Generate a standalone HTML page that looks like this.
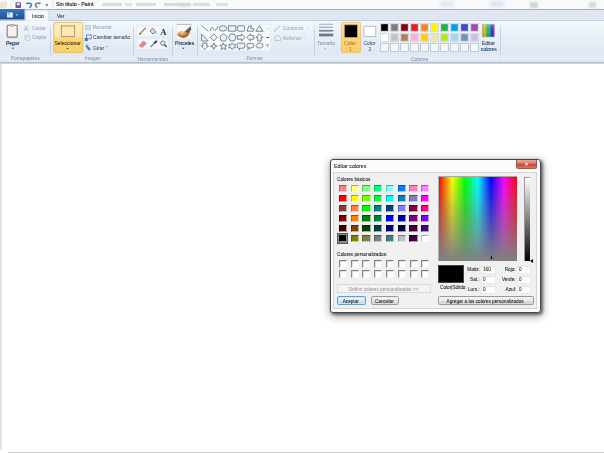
<!DOCTYPE html><html><head><meta charset="utf-8"><style>
*{margin:0;padding:0;box-sizing:border-box}
html,body{width:604px;height:453px;overflow:hidden;background:#fff;font-family:"Liberation Sans",sans-serif;position:relative}
.a{position:absolute}
.t{position:absolute;white-space:nowrap;line-height:1;color:#222;-webkit-text-stroke:.06px currentColor}
.sep{position:absolute;width:1px;background:linear-gradient(rgba(197,210,226,0),#c5d2e2 20%,#c5d2e2 80%,rgba(197,210,226,0))}
.glabel{position:absolute;top:55.5px;font-size:5px;color:#6f7f94;white-space:nowrap;line-height:1}
.rt{position:absolute;font-size:5px;color:#1e395b;white-space:nowrap;line-height:1}
.dis{color:#9aa5b3}
.sw{position:absolute;width:8.2px;height:7.4px;border-top:1px solid rgba(0,0,0,.35);border-left:1px solid rgba(0,0,0,.25);border-right:.5px solid rgba(255,255,255,.6);border-bottom:.5px solid rgba(255,255,255,.6)}
.cb{position:absolute;width:8px;height:8px;background:#fff;border-top:1px solid #7e7e7e;border-left:1px solid #8a8a8a;border-right:1px solid #f4f4f4;border-bottom:1px solid #f4f4f4;box-shadow:inset .6px .6px 0 #c8c8c8}
.dt{position:absolute;white-space:nowrap;line-height:1;color:#1a1a1a;font-size:4.7px;-webkit-text-stroke:.06px currentColor}
.btn{position:absolute;border:1px solid #9a9a9a;border-radius:1.5px;background:linear-gradient(#f4f4f4,#ebebeb 50%,#dedede 51%,#d6d6d6)}
.ed{position:absolute;background:#fdfdfd;border:.5px solid #ebebeb;border-top-color:#e2e2e2}
</style></head><body><div id="root" style="position:absolute;left:0;top:0;width:604px;height:453px;overflow:hidden;will-change:transform">
<div class="a" style="left:0;top:0;width:604px;height:9px;background:#f7f9fb"></div>
<div class="a" style="left:0;top:8.8px;width:604px;height:1.2px;background:#a8afb8"></div>
<div class="a" style="left:0;top:9.7px;width:604px;height:10.3px;background:#e0e7f0"></div>
<div class="a" style="left:0;top:20px;width:604px;height:42.4px;background:linear-gradient(#f4f8fd,#e9eff7 35%,#dfe8f3 80%,#e4ebf5 86%,#e6edf6 95%,#d8e0ea);border-top:1px solid #bfcde0"></div>
<div class="a" style="left:0;top:62.4px;width:604px;height:2px;background:linear-gradient(#aebbcb,#d5dbe3)"></div>
<div class="a" style="left:0;top:64px;width:2px;height:386px;background:linear-gradient(90deg,#d8e0ea,#e6ecf3)"></div>
<div class="a" style="left:8px;top:452px;width:596px;height:1px;background:#cacaca"></div>
<div class="a" style="left:102.0px;top:3.2px;width:19.7px;height:2.6px;background:#dadde1;filter:blur(.6px)"></div>
<div class="a" style="left:124.5px;top:3.2px;width:7.5px;height:2.6px;background:#e0e3e6;filter:blur(.6px)"></div>
<div class="a" style="left:136.0px;top:3.2px;width:20.4px;height:2.6px;background:#dadde1;filter:blur(.6px)"></div>
<div class="a" style="left:164.0px;top:3.2px;width:27.3px;height:2.6px;background:#d6dadd;filter:blur(.6px)"></div>
<div class="a" style="left:193.0px;top:3.2px;width:16.8px;height:2.6px;background:#dadde1;filter:blur(.6px)"></div>
<div class="a" style="left:215.6px;top:3.2px;width:12.8px;height:2.6px;background:#dee1e4;filter:blur(.6px)"></div>
<div class="a" style="left:180px;top:3px;width:10px;height:4px;background:#c8e0d4;filter:blur(.8px);opacity:.7"></div>
<div class="a" style="left:440px;top:1px;width:14px;height:6px;background:#c8d2e6;filter:blur(1.5px);opacity:.4"></div>
<div class="a" style="left:490px;top:1px;width:14px;height:6px;background:#c0c4e6;filter:blur(1.5px);opacity:.4"></div>
<div class="a" style="left:530px;top:2px;width:8px;height:6px;background:#a0a4aa;filter:blur(1.2px);opacity:.45"></div>
<div class="a" style="left:589px;top:2px;width:7px;height:6px;background:#b0b4ba;filter:blur(1.2px);opacity:.45"></div>

<svg class="a" style="left:0;top:0" width="604" height="64" viewBox="0 0 604 64">
<!-- QAT -->
<rect x="0" y="2" width="7" height="6" fill="#d8dcc0" opacity=".55"/>
<rect x="10.5" y="1" width="0.8" height="7" fill="#dde0e4"/>
<rect x="15.5" y="2.3" width="5.5" height="5.6" rx=".6" fill="#6d5c9c"/>
<rect x="16.8" y="3" width="3" height="2.2" fill="#e8e4f4"/>
<path d="M27 3.3 L29.6 3.3 Q31.4 3.3 31.4 5.1 Q31.4 6.6 29.4 7.7" fill="none" stroke="#3a84b2" stroke-width="1.6"/>
<path d="M25.8 3.3 L27.9 1.9 L27.9 4.7Z" fill="#3a84b2"/>
<path d="M39.8 3.3 L37.4 3.3 Q35.6 3.3 35.6 5.1 Q35.6 6.6 37.4 7.7" fill="none" stroke="#4a8cb6" stroke-width="1.6"/>
<path d="M41.1 3.3 L39.1 1.9 L39.1 4.7Z" fill="#4a8cb6"/>
<path d="M45.4 4.2 L48.2 4.2 L46.8 6.6Z" fill="#505a66"/>
<rect x="52.5" y="1" width="0.8" height="7" fill="#dde0e4"/>
<!-- file button -->
<rect x="0" y="9" width="24.5" height="10.5" fill="url(#gfile)"/>
<rect x="7" y="12.5" width="5.8" height="5" fill="#e6eefa"/>
<rect x="7.6" y="13.2" width="2" height="1.6" fill="#7aa0d0"/>
<path d="M15.8 14.6 L18 14.6 L16.9 15.8Z" fill="#fff"/>
<!-- inicio tab -->
<path d="M25.6 20.8 L25.6 10.8 Q25.6 10.1 26.4 10.1 L48 10.1 Q48.8 10.1 48.8 10.8 L48.8 20.8" fill="#f7fafd" stroke="#c4d2e2" stroke-width=".7"/>
<defs>
<linearGradient id="gfile" x1="0" y1="0" x2="0" y2="1"><stop offset="0" stop-color="#3a78c8"/><stop offset=".5" stop-color="#2a62b0"/><stop offset="1" stop-color="#1f4f98"/></linearGradient>
<linearGradient id="gsel" x1="0" y1="0" x2="0" y2="1"><stop offset="0" stop-color="#fdecb8"/><stop offset=".5" stop-color="#fce09a"/><stop offset=".53" stop-color="#fcd678"/><stop offset="1" stop-color="#fbd268"/></linearGradient>
<linearGradient id="gc1" x1="0" y1="0" x2="0" y2="1"><stop offset="0" stop-color="#fde7b2"/><stop offset=".45" stop-color="#fcd77e"/><stop offset="1" stop-color="#fbcf62"/></linearGradient>
<linearGradient id="gbrush" x1="0" y1="0" x2="1" y2="1"><stop offset="0" stop-color="#f4e2d0"/><stop offset=".5" stop-color="#c46a2a"/><stop offset="1" stop-color="#6a3a1a"/></linearGradient>
<linearGradient id="grain" x1="0" y1="0" x2="1" y2="0"><stop offset="0" stop-color="#f0902a"/><stop offset=".22" stop-color="#d0e020"/><stop offset=".42" stop-color="#30c840"/><stop offset=".6" stop-color="#20b0c8"/><stop offset=".78" stop-color="#3a30e0"/><stop offset="1" stop-color="#c030d0"/></linearGradient>
<linearGradient id="gshade" x1="0" y1="0" x2="0" y2="1"><stop offset="0" stop-color="#fff" stop-opacity=".25"/><stop offset=".6" stop-color="#000" stop-opacity=".05"/><stop offset="1" stop-color="#000" stop-opacity=".2"/></linearGradient>
</defs>

<!-- Portapapeles -->
<rect x="7.2" y="25.3" width="10" height="11.8" rx=".8" fill="#f7f0ee" stroke="#8b7b6e" stroke-width="1.1"/>
<rect x="10.2" y="24.6" width="4" height="1.4" rx=".4" fill="#e8e4e0" stroke="#8b7b6e" stroke-width=".6"/>
<path d="M11.7 47.8 L14.1 47.8 L12.9 49.2Z" fill="#304a6a"/>
<!-- scissors -->
<path d="M24.6 25.6 L27.6 29.4 M27.8 25.6 L24.8 29.4" stroke="#a8b4c2" stroke-width=".8"/>
<circle cx="24.9" cy="29.6" r=".9" fill="none" stroke="#a8b4c2" stroke-width=".6"/>
<circle cx="27.6" cy="29.6" r=".9" fill="none" stroke="#a8b4c2" stroke-width=".6"/>
<!-- copy -->
<rect x="24.8" y="35" width="3.6" height="4.2" fill="#f4f6f9" stroke="#b4bfcc" stroke-width=".6"/>
<rect x="26.2" y="36.2" width="3.6" height="4.2" fill="#eef1f6" stroke="#b4bfcc" stroke-width=".6"/>

<!-- Seleccionar -->
<rect x="53.8" y="22.4" width="29" height="30" rx="1.2" fill="url(#gsel)" stroke="#e5b85c" stroke-width=".8"/>
<rect x="54.5" y="23" width="27.6" height="15.5" fill="#fff" opacity=".18"/>
<rect x="54.4" y="37.6" width="27.8" height="1" fill="#f6c860" opacity=".6"/>
<rect x="61.3" y="25.9" width="13.4" height="10.6" fill="#fce8b0" stroke="#a08660" stroke-width=".85"/>
<path d="M66.4 47.9 L68.8 47.9 L67.6 49.3Z" fill="#4a3010"/>
<!-- crop / resize / rotate -->
<rect x="85.6" y="25.3" width="4.6" height="4.6" fill="#c4d2e0" stroke="#a8bccf" stroke-width=".6"/>
<path d="M87.1 25.3 V29.9 M88.6 25.3 V29.9 M85.6 27.6 H90.2" stroke="#e8eef5" stroke-width=".5"/>
<rect x="86.6" y="35" width="4.6" height="3.8" fill="#eef4fb" stroke="#3a6ea8" stroke-width=".8"/>
<rect x="85" y="38.4" width="2.6" height="2.4" fill="#4a86c0" stroke="#2a5a90" stroke-width=".5"/>
<path d="M85.4 46.2 L87.4 45 L90.8 49.4 L88.8 50.6 Z" fill="#3a7aa8" opacity=".9"/>
<path d="M85.2 45.4 Q86.6 44.4 88.2 45" fill="none" stroke="#5ab0d8" stroke-width=".7"/>
<path d="M106.2 46.2 L108 46.2 L107.1 47.3Z" fill="#405070"/>

<!-- Herramientas box -->
<rect x="136.3" y="25.2" width="31.7" height="11" fill="#f3f6fa" stroke="#e0e6ee" stroke-width=".6"/>
<rect x="136.3" y="38.8" width="31.7" height="10.4" fill="#f3f6fa" stroke="#e0e6ee" stroke-width=".6"/>
<path d="M139.6 34.2 L145.8 27.8" stroke="#b09a58" stroke-width="1.6"/>
<path d="M139.4 34.4 L140.6 33" stroke="#606060" stroke-width="1.2"/>
<path d="M150 31 L152.5 28.2 L155.6 31.4 L153 34 Z" fill="#d0d8e2" stroke="#5a6a80" stroke-width=".8"/>
<path d="M155.6 31.4 Q156.6 33 156.2 34" stroke="#3a9ad0" stroke-width=".8" fill="none"/>
<text x="160.3" y="34.7" font-family="Liberation Serif" font-weight="bold" font-size="8.6" fill="#1a2436">A</text>
<path d="M139 45.8 L143.4 41 L146.4 43.4 L142.2 47.6 Z" fill="#e48a8e" stroke="#d27a7c" stroke-width=".6"/>
<path d="M150.6 47 L154.6 43" stroke="#6a8aa8" stroke-width="1.1"/>
<path d="M154.2 43.4 L156.8 40.8" stroke="#203040" stroke-width="1.8"/>
<circle cx="162.8" cy="43.1" r="2.1" fill="#f4f8fc" stroke="#4a5868" stroke-width=".8"/>
<path d="M164.3 44.6 L166.6 47" stroke="#303a48" stroke-width="1.2"/>

<!-- Pinceles -->
<rect x="176.8" y="24" width="14.8" height="14.3" fill="#faf8f6" stroke="#e4e2e0" stroke-width=".5"/>
<rect x="176.8" y="24" width="14.8" height=".9" fill="#9a9a9a" opacity=".6"/>
<path d="M177.4 35 Q178 30.5 182.5 31.5 Q186.5 32.5 190.2 30.2 Q189.8 35.8 185 37.4 Q180 38.4 177.4 35Z" fill="url(#gbrush2)"/>
<path d="M184.5 31.8 L190.6 26 L191.2 29.8 L188 32.6Z" fill="#3c4a52" opacity=".85"/>
<defs><radialGradient id="gbrush2" cx=".35" cy=".35" r=".7"><stop offset="0" stop-color="#f8d8b0"/><stop offset=".45" stop-color="#d08a48"/><stop offset="1" stop-color="#7a4a28"/></radialGradient></defs>
<path d="M182.1 47.8 L184.5 47.8 L183.3 49.2Z" fill="#304a6a"/>

<!-- Formas gallery -->
<rect x="200.2" y="24.2" width="70.3" height="26.6" fill="#f7fafd" stroke="#dbe3ec" stroke-width=".6"/>
<g fill="#eaf3f8" stroke="#46525e" stroke-width=".68" stroke-linejoin="round">
<path d="M201.6 25.6 L208.4 31.3" fill="none"/>
<path d="M210.2 31.2 Q211.5 25 213.5 29 Q215.5 33 218.2 25.6" fill="none"/>
<ellipse cx="223" cy="28.4" rx="3.8" ry="2.7"/>
<rect x="228.4" y="25.8" width="7.4" height="5.4"/>
<rect x="237.3" y="25.8" width="7.4" height="5.4" rx="1.4"/>
<path d="M247.2 31.2 L248.6 26.2 L251.6 25.8 L250.6 28.2 L253.8 28.6 L253.2 31.2 Z"/>
<path d="M259.4 25.6 L263 31.3 L255.9 31.3 Z"/>
<path d="M201.6 34 L201.6 41 L208.2 41 Z"/>
<path d="M213.8 33.8 L217.2 37.4 L213.8 41 L210.4 37.4 Z"/>
<path d="M223.4 33.8 L227 36.6 L225.6 41 L221.2 41 L219.8 36.6 Z"/>
<path d="M230.4 34 L234.2 34 L236 37.4 L234.2 40.9 L230.4 40.9 L228.6 37.4 Z"/>
<path d="M237.3 35.6 L241.5 35.6 L241.5 33.8 L244.8 37.4 L241.5 41 L241.5 39.2 L237.3 39.2 Z"/>
<path d="M253.8 35.6 L250.3 35.6 L250.3 33.8 L246.9 37.4 L250.3 41 L250.3 39.2 L253.8 39.2 Z"/>
<path d="M257.6 41 L257.6 37.4 L255.9 37.4 L259.4 33.8 L262.9 37.4 L261.2 37.4 L261.2 41 Z"/>
<path d="M202.8 43 L206.8 43 L206.8 46 L208.4 46 L204.8 49.6 L201.2 46 L202.8 46 Z"/>
<path d="M213.8 42.9 L214.8 45.3 L217.2 46.2 L214.8 47.1 L213.8 49.5 L212.8 47.1 L210.4 46.2 L212.8 45.3 Z"/>
<path d="M223.4 42.9 L224.4 45.2 L227 45.4 L225 47 L225.7 49.6 L223.4 48.2 L221.1 49.6 L221.8 47 L219.8 45.4 L222.4 45.2 Z"/>
<path d="M232.2 42.9 L233.4 44.6 L235.8 44.6 L234.6 46.2 L235.8 47.8 L233.4 47.8 L232.2 49.5 L231 47.8 L228.6 47.8 L229.8 46.2 L228.6 44.6 L231 44.6 Z"/>
<path d="M238.6 43.2 L243.6 43.2 Q244.8 43.2 244.8 44.4 L244.8 47 Q244.8 48.2 243.6 48.2 L240.6 48.2 L239 49.8 L239.4 48.2 L238.6 48.2 Q237.3 48.2 237.3 47 L237.3 44.4 Q237.3 43.2 238.6 43.2Z"/>
<ellipse cx="250.4" cy="45.6" rx="3.6" ry="2.5"/>
<path d="M248.4 47.8 L247.6 49.6 L249.8 48.1" />
<path d="M257 44.2 Q257.5 42.8 259 43.3 Q260.2 42.4 261.4 43.4 Q263.2 43.6 262.8 45.4 Q263.4 47.2 261.6 47.6 Q260.4 48.6 258.8 47.8 Q256.6 48.4 256.4 46.6 Q255.4 45.2 257 44.2Z"/>
</g>
<path d="M266.2 29.2 L267.6 27.8 L269 29.2Z" fill="#c0c8d2"/>
<rect x="266.3" y="37" width="2.8" height=".9" fill="#303a48"/>
<path d="M266.2 45.6 L269 45.6 L267.6 47Z" fill="#7a8898"/>
<rect x="266.2" y="44.2" width="2.8" height=".6" fill="#7a8898"/>
<rect x="264.8" y="24.4" width=".6" height="26.2" fill="#e4eaf1"/>
<!-- contorno / rellenar -->
<path d="M274.5 31 L280.5 25.6" stroke="#b0bac6" stroke-width="1"/>
<path d="M274.4 31.4 L276 31.2 L274.6 29.8Z" fill="#b0bac6"/>
<path d="M307 27.6 L308.6 27.6 L307.8 28.6Z" fill="#b0bac6"/>
<path d="M275 40.6 L275 37 L277.6 35 L280.6 38 L280.6 40.6 Z" fill="none" stroke="#b0bac6" stroke-width=".8"/>
<path d="M304 37.6 L305.6 37.6 L304.8 38.6Z" fill="#b0bac6"/>
<!-- tamano -->
<rect x="319" y="23.8" width="14.2" height=".9" fill="#9aa6b6"/>
<rect x="319" y="26.7" width="14.2" height="1" fill="#8a97a9"/>
<rect x="319" y="29.9" width="14.2" height="1.7" fill="#76849a"/>
<rect x="319" y="33.6" width="14.2" height="2.8" fill="#6c7a90"/>
<path d="M324.4 48 L326.2 48 L325.3 49Z" fill="#8090a8"/>

<!-- Color 1 -->
<rect x="341.4" y="22.4" width="19.2" height="30" rx="1.2" fill="url(#gc1)" stroke="#e5bd70" stroke-width=".8"/>
<rect x="344.3" y="24.8" width="13.2" height="12.8" fill="#000" stroke="#d9a86a" stroke-width=".8"/>
<!-- Color 2 -->
<rect x="364" y="26.2" width="11.8" height="10.4" fill="#fff" stroke="#a6b0bc" stroke-width=".8"/>
<!-- editar colores icon -->
<rect x="482.2" y="24.2" width="12.4" height="12.8" fill="url(#grain)"/>
<rect x="482.2" y="24.2" width="12.4" height="12.8" fill="url(#gshade)"/>
<rect x="482.2" y="24.2" width="12.4" height="12.8" fill="none" stroke="#b8b8c0" stroke-width=".6"/>
</svg>

<div class="a" style="left:380.30px;top:23.20px;width:9px;height:9px;border:1px solid #d4dae2;background:#000000;box-shadow:inset 0 0 0 .5px rgba(255,255,255,.3)"></div>
<div class="a" style="left:390.25px;top:23.20px;width:9px;height:9px;border:1px solid #d4dae2;background:#7f7f7f;box-shadow:inset 0 0 0 .5px rgba(255,255,255,.3)"></div>
<div class="a" style="left:400.20px;top:23.20px;width:9px;height:9px;border:1px solid #d4dae2;background:#880015;box-shadow:inset 0 0 0 .5px rgba(255,255,255,.3)"></div>
<div class="a" style="left:410.15px;top:23.20px;width:9px;height:9px;border:1px solid #d4dae2;background:#ed1c24;box-shadow:inset 0 0 0 .5px rgba(255,255,255,.3)"></div>
<div class="a" style="left:420.10px;top:23.20px;width:9px;height:9px;border:1px solid #d4dae2;background:#ff7f27;box-shadow:inset 0 0 0 .5px rgba(255,255,255,.3)"></div>
<div class="a" style="left:430.05px;top:23.20px;width:9px;height:9px;border:1px solid #d4dae2;background:#fff200;box-shadow:inset 0 0 0 .5px rgba(255,255,255,.3)"></div>
<div class="a" style="left:440.00px;top:23.20px;width:9px;height:9px;border:1px solid #d4dae2;background:#22b14c;box-shadow:inset 0 0 0 .5px rgba(255,255,255,.3)"></div>
<div class="a" style="left:449.95px;top:23.20px;width:9px;height:9px;border:1px solid #d4dae2;background:#00a2e8;box-shadow:inset 0 0 0 .5px rgba(255,255,255,.3)"></div>
<div class="a" style="left:459.90px;top:23.20px;width:9px;height:9px;border:1px solid #d4dae2;background:#3f48cc;box-shadow:inset 0 0 0 .5px rgba(255,255,255,.3)"></div>
<div class="a" style="left:469.85px;top:23.20px;width:9px;height:9px;border:1px solid #d4dae2;background:#a349a4;box-shadow:inset 0 0 0 .5px rgba(255,255,255,.3)"></div>
<div class="a" style="left:380.30px;top:33.00px;width:9px;height:9px;border:1px solid #d4dae2;background:#ffffff;box-shadow:inset 0 0 0 .5px rgba(255,255,255,.3)"></div>
<div class="a" style="left:390.25px;top:33.00px;width:9px;height:9px;border:1px solid #d4dae2;background:#c3c3c3;box-shadow:inset 0 0 0 .5px rgba(255,255,255,.3)"></div>
<div class="a" style="left:400.20px;top:33.00px;width:9px;height:9px;border:1px solid #d4dae2;background:#b97a57;box-shadow:inset 0 0 0 .5px rgba(255,255,255,.3)"></div>
<div class="a" style="left:410.15px;top:33.00px;width:9px;height:9px;border:1px solid #d4dae2;background:#ffaec9;box-shadow:inset 0 0 0 .5px rgba(255,255,255,.3)"></div>
<div class="a" style="left:420.10px;top:33.00px;width:9px;height:9px;border:1px solid #d4dae2;background:#ffc90e;box-shadow:inset 0 0 0 .5px rgba(255,255,255,.3)"></div>
<div class="a" style="left:430.05px;top:33.00px;width:9px;height:9px;border:1px solid #d4dae2;background:#efe4b0;box-shadow:inset 0 0 0 .5px rgba(255,255,255,.3)"></div>
<div class="a" style="left:440.00px;top:33.00px;width:9px;height:9px;border:1px solid #d4dae2;background:#b5e61d;box-shadow:inset 0 0 0 .5px rgba(255,255,255,.3)"></div>
<div class="a" style="left:449.95px;top:33.00px;width:9px;height:9px;border:1px solid #d4dae2;background:#99d9ea;box-shadow:inset 0 0 0 .5px rgba(255,255,255,.3)"></div>
<div class="a" style="left:459.90px;top:33.00px;width:9px;height:9px;border:1px solid #d4dae2;background:#7092be;box-shadow:inset 0 0 0 .5px rgba(255,255,255,.3)"></div>
<div class="a" style="left:469.85px;top:33.00px;width:9px;height:9px;border:1px solid #d4dae2;background:#c8bfe7;box-shadow:inset 0 0 0 .5px rgba(255,255,255,.3)"></div>
<div class="a" style="left:380.30px;top:42.80px;width:9px;height:9px;border:1px solid #c2cad5;background:#f3f6fa"></div>
<div class="a" style="left:390.25px;top:42.80px;width:9px;height:9px;border:1px solid #c2cad5;background:#f3f6fa"></div>
<div class="a" style="left:400.20px;top:42.80px;width:9px;height:9px;border:1px solid #c2cad5;background:#f3f6fa"></div>
<div class="a" style="left:410.15px;top:42.80px;width:9px;height:9px;border:1px solid #c2cad5;background:#f3f6fa"></div>
<div class="a" style="left:420.10px;top:42.80px;width:9px;height:9px;border:1px solid #c2cad5;background:#f3f6fa"></div>
<div class="a" style="left:430.05px;top:42.80px;width:9px;height:9px;border:1px solid #c2cad5;background:#f3f6fa"></div>
<div class="a" style="left:440.00px;top:42.80px;width:9px;height:9px;border:1px solid #c2cad5;background:#f3f6fa"></div>
<div class="a" style="left:449.95px;top:42.80px;width:9px;height:9px;border:1px solid #c2cad5;background:#f3f6fa"></div>
<div class="a" style="left:459.90px;top:42.80px;width:9px;height:9px;border:1px solid #c2cad5;background:#f3f6fa"></div>
<div class="a" style="left:469.85px;top:42.80px;width:9px;height:9px;border:1px solid #c2cad5;background:#f3f6fa"></div>
<div class="t" style="left:56.0px;top:2.2px;font-size:5.30px;color:#1a1a1a;-webkit-text-stroke:.14px #1a1a1a">Sin título - Paint</div>
<div class="t" style="left:32.0px;top:13.8px;font-size:5.10px;color:#2a2a2a;">Inicio</div>
<div class="t" style="left:57.0px;top:14.1px;font-size:5.00px;color:#2a3a50;">Ver</div>
<div class="t" style="left:6.0px;top:40.9px;font-size:5.00px;color:#1e395b;-webkit-text-stroke:.16px #1e395b">Pegar</div>
<div class="t" style="left:32.0px;top:25.8px;font-size:5.00px;color:#9aa8b8;">Cortar</div>
<div class="t" style="left:32.0px;top:35.2px;font-size:5.00px;color:#9aa8b8;">Copiar</div>
<div class="t" style="left:10.7px;top:56.6px;font-size:4.92px;color:#8796aa;">Portapapeles</div>
<div class="t" style="left:54.4px;top:40.9px;font-size:5.05px;color:#3a2a10;">Seleccionar</div>
<div class="t" style="left:92.7px;top:26.3px;font-size:4.96px;color:#9aa8b8;">Recortar</div>
<div class="t" style="left:93.1px;top:35.4px;font-size:5.00px;color:#3e5066;">Cambiar tamaño</div>
<div class="t" style="left:93.1px;top:45.7px;font-size:5.00px;color:#3e5066;">Girar</div>
<div class="t" style="left:85.0px;top:56.6px;font-size:4.80px;color:#8796aa;">Imagen</div>
<div class="t" style="left:137.5px;top:56.6px;font-size:5.08px;color:#8796aa;">Herramientas</div>
<div class="t" style="left:175.0px;top:40.9px;font-size:5.10px;color:#1e395b;-webkit-text-stroke:.14px #1e395b">Pinceles</div>
<div class="t" style="left:246.4px;top:56.6px;font-size:4.84px;color:#8796aa;">Formas</div>
<div class="t" style="left:282.7px;top:26.0px;font-size:5.00px;color:#a4b0be;">Contorno</div>
<div class="t" style="left:282.7px;top:35.9px;font-size:5.00px;color:#a4b0be;">Rellenar</div>
<div class="t" style="left:317.2px;top:40.9px;font-size:5.00px;color:#8c99aa;">Tamaño</div>
<div class="t" style="left:344.1px;top:41.1px;font-size:5.00px;color:#b8703a;">Color</div>
<div class="t" style="left:348.9px;top:46.9px;font-size:5.00px;color:#b8703a;">1</div>
<div class="t" style="left:363.5px;top:41.1px;font-size:5.00px;color:#4a5a70;">Color</div>
<div class="t" style="left:368.4px;top:46.9px;font-size:5.00px;color:#4a5a70;">2</div>
<div class="t" style="left:481.8px;top:41.1px;font-size:5.00px;color:#1e395b;">Editar</div>
<div class="t" style="left:480.7px;top:47.2px;font-size:5.00px;color:#1e395b;">colores</div>
<div class="t" style="left:410.5px;top:56.6px;font-size:5.19px;color:#8796aa;">Colores</div>
<div class="sep" style="left:49.5px;top:23px;height:38px"></div>
<div class="sep" style="left:133.0px;top:23px;height:38px"></div>
<div class="sep" style="left:171.5px;top:23px;height:38px"></div>
<div class="sep" style="left:196.8px;top:23px;height:38px"></div>
<div class="sep" style="left:313.8px;top:23px;height:38px"></div>
<div class="sep" style="left:500.0px;top:23px;height:38px"></div>
<div class="a" style="left:330px;top:159px;width:211px;height:153.5px;border-radius:4px;box-shadow:1.5px 1.5px 3px rgba(0,0,0,.5),0.5px 2.5px 9px 1px rgba(0,0,0,.3)"></div>
<div class="a" style="left:330px;top:159px;width:211px;height:153.5px;border-radius:3px;border:1px solid #45494c;background:#fbfbfb"></div>
<div class="a" style="left:516px;top:160px;width:21px;height:8.5px;border-radius:0 0 2.5px 2.5px;border:1px solid #9a5a4e;border-top:none;background:linear-gradient(#e4a898,#d88070 40%,#c9493a 55%,#cf5e4a 80%,#d8806a)"></div>
<div class="t" style="left:524.8px;top:161.2px;font-size:6.2px;color:#f4ece8;font-weight:bold">&#215;</div>
<div class="dt" style="left:334px;top:163.8px;font-size:5.3px">Editar colores</div>
<div class="a" style="left:333px;top:172px;width:204px;height:137px;background:#f0f0f0;border:1px solid #d2d4d6"></div>
<div class="dt" style="left:337px;top:177.5px">Colores básicos</div>
<div class="sw" style="left:338.80px;top:184.80px;background:#FF8080"></div>
<div class="sw" style="left:350.58px;top:184.80px;background:#FFFF80"></div>
<div class="sw" style="left:362.36px;top:184.80px;background:#80FF80"></div>
<div class="sw" style="left:374.14px;top:184.80px;background:#00FF80"></div>
<div class="sw" style="left:385.92px;top:184.80px;background:#80FFFF"></div>
<div class="sw" style="left:397.70px;top:184.80px;background:#0080FF"></div>
<div class="sw" style="left:409.48px;top:184.80px;background:#FF80C0"></div>
<div class="sw" style="left:421.26px;top:184.80px;background:#FF80FF"></div>
<div class="sw" style="left:338.80px;top:194.80px;background:#FF0000"></div>
<div class="sw" style="left:350.58px;top:194.80px;background:#FFFF00"></div>
<div class="sw" style="left:362.36px;top:194.80px;background:#80FF00"></div>
<div class="sw" style="left:374.14px;top:194.80px;background:#00FF40"></div>
<div class="sw" style="left:385.92px;top:194.80px;background:#00FFFF"></div>
<div class="sw" style="left:397.70px;top:194.80px;background:#0080C0"></div>
<div class="sw" style="left:409.48px;top:194.80px;background:#8080C0"></div>
<div class="sw" style="left:421.26px;top:194.80px;background:#FF00FF"></div>
<div class="sw" style="left:338.80px;top:204.80px;background:#804040"></div>
<div class="sw" style="left:350.58px;top:204.80px;background:#FF8040"></div>
<div class="sw" style="left:362.36px;top:204.80px;background:#00FF00"></div>
<div class="sw" style="left:374.14px;top:204.80px;background:#008080"></div>
<div class="sw" style="left:385.92px;top:204.80px;background:#004080"></div>
<div class="sw" style="left:397.70px;top:204.80px;background:#8080FF"></div>
<div class="sw" style="left:409.48px;top:204.80px;background:#800040"></div>
<div class="sw" style="left:421.26px;top:204.80px;background:#FF0080"></div>
<div class="sw" style="left:338.80px;top:214.80px;background:#800000"></div>
<div class="sw" style="left:350.58px;top:214.80px;background:#FF8000"></div>
<div class="sw" style="left:362.36px;top:214.80px;background:#008000"></div>
<div class="sw" style="left:374.14px;top:214.80px;background:#008040"></div>
<div class="sw" style="left:385.92px;top:214.80px;background:#0000FF"></div>
<div class="sw" style="left:397.70px;top:214.80px;background:#0000A0"></div>
<div class="sw" style="left:409.48px;top:214.80px;background:#800080"></div>
<div class="sw" style="left:421.26px;top:214.80px;background:#8000FF"></div>
<div class="sw" style="left:338.80px;top:224.80px;background:#400000"></div>
<div class="sw" style="left:350.58px;top:224.80px;background:#804000"></div>
<div class="sw" style="left:362.36px;top:224.80px;background:#004000"></div>
<div class="sw" style="left:374.14px;top:224.80px;background:#004040"></div>
<div class="sw" style="left:385.92px;top:224.80px;background:#000080"></div>
<div class="sw" style="left:397.70px;top:224.80px;background:#000040"></div>
<div class="sw" style="left:409.48px;top:224.80px;background:#400040"></div>
<div class="sw" style="left:421.26px;top:224.80px;background:#400080"></div>
<div class="sw" style="left:338.80px;top:234.80px;background:#000000"></div>
<div class="sw" style="left:350.58px;top:234.80px;background:#808000"></div>
<div class="sw" style="left:362.36px;top:234.80px;background:#808040"></div>
<div class="sw" style="left:374.14px;top:234.80px;background:#808080"></div>
<div class="sw" style="left:385.92px;top:234.80px;background:#408080"></div>
<div class="sw" style="left:397.70px;top:234.80px;background:#C0C0C0"></div>
<div class="sw" style="left:409.48px;top:234.80px;background:#400040"></div>
<div class="sw" style="left:421.26px;top:234.80px;background:#FFFFFF"></div>
<div class="a" style="left:337.4px;top:233.4px;width:11px;height:10.2px;border:1px solid #5a5a5a;box-shadow:inset 0 0 0 1px #8a8a8a"></div>
<div class="dt" style="left:337px;top:253.1px">Colores personalizados:</div>
<div class="cb" style="left:338.90px;top:260.20px"></div>
<div class="cb" style="left:350.68px;top:260.20px"></div>
<div class="cb" style="left:362.46px;top:260.20px"></div>
<div class="cb" style="left:374.24px;top:260.20px"></div>
<div class="cb" style="left:386.02px;top:260.20px"></div>
<div class="cb" style="left:397.80px;top:260.20px"></div>
<div class="cb" style="left:409.58px;top:260.20px"></div>
<div class="cb" style="left:421.36px;top:260.20px"></div>
<div class="cb" style="left:338.90px;top:269.80px"></div>
<div class="cb" style="left:350.68px;top:269.80px"></div>
<div class="cb" style="left:362.46px;top:269.80px"></div>
<div class="cb" style="left:374.24px;top:269.80px"></div>
<div class="cb" style="left:386.02px;top:269.80px"></div>
<div class="cb" style="left:397.80px;top:269.80px"></div>
<div class="cb" style="left:409.58px;top:269.80px"></div>
<div class="cb" style="left:421.36px;top:269.80px"></div>
<div class="a" style="left:337px;top:284.3px;width:93.5px;height:8.5px;border:1px solid #d8d8d8;background:#f3f3f3"></div>
<div class="dt" style="left:348.8px;top:287.6px;color:#a49aa4">Definir colores personalizados &gt;&gt;</div>
<div class="btn" style="left:337px;top:296.2px;width:28.5px;height:9.3px;border-color:#6a9cc4;background:linear-gradient(#eaf5fc,#dbeef9 50%,#c8e5f7 51%,#b8dcf2);box-shadow:inset 0 0 0 .8px #c8e6f6"></div>
<div class="dt" style="left:342.7px;top:300.1px">Aceptar</div>
<div class="btn" style="left:370.5px;top:296.2px;width:28px;height:9.3px"></div>
<div class="dt" style="left:375px;top:300.1px">Cancelar</div>
<div class="a" style="left:437.6px;top:176.2px;width:79.6px;height:85px;border-top:1px solid #a8a8a8;border-left:1px solid #b0b0b0;background:linear-gradient(rgba(128,128,128,0),#808080),linear-gradient(90deg,#f00,#ff0 16.67%,#0f0 33.33%,#0ff 50%,#00f 66.67%,#f0f 83.33%,#f00)"></div>
<div class="a" style="left:491.2px;top:256px;width:1.2px;height:3px;background:#111"></div>
<div class="a" style="left:489.5px;top:258.2px;width:1.2px;height:1.2px;background:#333"></div>
<div class="a" style="left:493.2px;top:258.2px;width:1.2px;height:1.2px;background:#333"></div>
<div class="a" style="left:524.3px;top:176.6px;width:5.7px;height:84px;border-top:1px solid #999;border-left:1px solid #999;background:linear-gradient(#fff,#000)"></div>
<div class="a" style="left:530.2px;top:259.2px;width:0;height:0;border-top:2.6px solid transparent;border-bottom:2.6px solid transparent;border-right:3px solid #000"></div>
<div class="a" style="left:438.2px;top:265px;width:25.8px;height:18.2px;background:#000;border:1px solid #444"></div>
<div class="dt" style="left:440px;top:286.4px">Color|Sólido</div>
<div class="dt" style="left:467.3px;top:268.1px">Matiz:</div>
<div class="ed" style="left:481px;top:266px;width:15px;height:7.5px"></div>
<div class="dt" style="left:483px;top:268.3px">160</div>
<div class="dt" style="left:470.0px;top:277.9px">Sat.:</div>
<div class="ed" style="left:481px;top:276px;width:15px;height:7.5px"></div>
<div class="dt" style="left:483px;top:278.3px">0</div>
<div class="dt" style="left:468.0px;top:288.3px">Lum.:</div>
<div class="ed" style="left:481px;top:286px;width:15px;height:7.5px"></div>
<div class="dt" style="left:483px;top:288.3px">0</div>
<div class="dt" style="left:504.7px;top:268.1px">Rojo:</div>
<div class="ed" style="left:517px;top:266px;width:13.5px;height:7.5px"></div>
<div class="dt" style="left:519px;top:268.3px">0</div>
<div class="dt" style="left:502.0px;top:277.9px">Verde:</div>
<div class="ed" style="left:517px;top:276px;width:13.5px;height:7.5px"></div>
<div class="dt" style="left:519px;top:278.3px">0</div>
<div class="dt" style="left:505.6px;top:288.3px">Azul:</div>
<div class="ed" style="left:517px;top:286px;width:13.5px;height:7.5px"></div>
<div class="dt" style="left:519px;top:288.3px">0</div>
<div class="btn" style="left:438px;top:296.3px;width:96px;height:9.2px"></div>
<div class="dt" style="left:446.5px;top:300.2px">Agregar a los colores personalizados</div>
</div></body></html>
